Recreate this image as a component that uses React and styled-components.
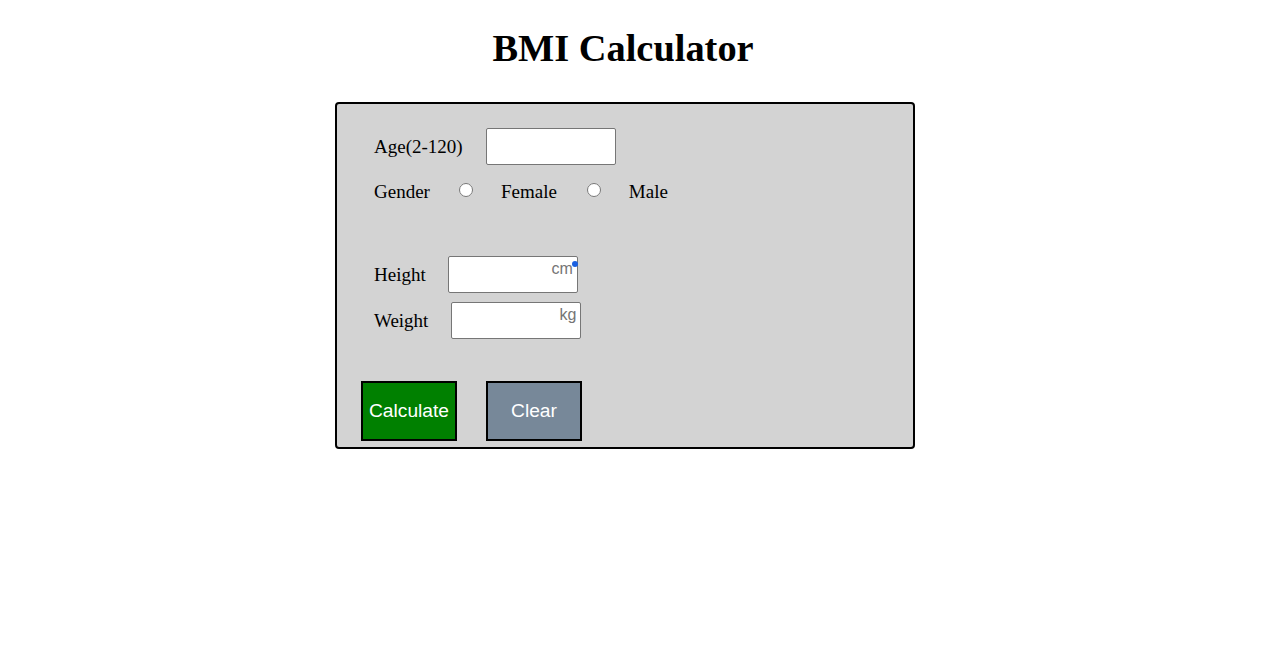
import React, { useState } from "react";
import styled, { createGlobalStyle } from "styled-components";

const GlobalStyle = createGlobalStyle`
  html, body {
    margin: 0;
    padding: 0;
    background: #ffffff;
    font-family: "Liberation Serif", "Times New Roman", serif;
    color: #000000;
  }
`;

const Page = styled.div`
  width: 1250px;
  padding-top: 26px;
`;

const Title = styled.h1`
  margin: 0 0 32px;
  padding-right: 4px;
  text-align: center;
  font-family: "Liberation Serif", "Times New Roman", serif;
  font-size: 38.4px;
  line-height: 44px;
  font-weight: bold;
`;

const Card = styled.form`
  box-sizing: border-box;
  width: 580px;
  height: 347px;
  margin: 0 auto;
  padding: 24px 24px 5px;
  background: #d3d3d3;
  border: 2px solid #000000;
  border-radius: 4px;
  display: flex;
  flex-direction: column;
`;

const Row = styled.div`
  display: flex;
  align-items: center;
  height: ${({ $h }) => $h || 37}px;
  margin-top: ${({ $mt }) => $mt || 0}px;
  padding-left: 13px;
`;

const Label = styled.label`
  font-size: 19px;
  margin-right: ${({ $gap }) => $gap}px;
`;

const Field = styled.span`
  position: relative;
  display: inline-block;
`;

const TextInput = styled.input`
  box-sizing: border-box;
  width: 130px;
  height: 37px;
  margin: 0;
  padding: 3px 4px 14px;
  border: 1px solid #767676;
  border-radius: 2px;
  background: #ffffff;
  font-family: "Liberation Sans", Arial, sans-serif;
  font-size: 16px;
  text-align: right;
  outline: none;

  &::placeholder {
    color: #757575;
  }
`;

const Dot = styled.span`
  position: absolute;
  right: 0;
  top: 5px;
  width: 6px;
  height: 6px;
  border-radius: 50%;
  background: #1a5fe0;
`;

const Radio = styled.input`
  width: 14px;
  height: 14px;
  margin: 0 28px 5px 0;
`;

const Buttons = styled.div`
  display: flex;
  gap: 29px;
  margin-top: 42px;
`;

const Button = styled.button`
  box-sizing: border-box;
  width: 96px;
  height: 60px;
  padding: 0;
  border: 2px solid #000000;
  background: ${({ $bg }) => $bg};
  color: #ffffff;
  font-family: "Liberation Sans", Arial, sans-serif;
  font-size: 19.2px;
  cursor: pointer;
`;

const App = () => {
  const [age, setAge] = useState("");
  const [gender, setGender] = useState("");
  const [height, setHeight] = useState("");
  const [weight, setWeight] = useState("");

  const handleClear = () => {
    setAge("");
    setGender("");
    setHeight("");
    setWeight("");
  };

  return (
    <>
      <GlobalStyle />
      <Page>
        <Title>BMI Calculator</Title>
        <Card onSubmit={(e) => e.preventDefault()}>
          <Row>
            <Label $gap={23}>Age(2-120)</Label>
            <TextInput value={age} onChange={(e) => setAge(e.target.value)} />
          </Row>
          <Row $h={26} $mt={14}>
            <Label $gap={29}>Gender</Label>
            <Radio
              type="radio"
              name="gender"
              checked={gender === "female"}
              onChange={() => setGender("female")}
            />
            <Label $gap={30}>Female</Label>
            <Radio
              type="radio"
              name="gender"
              checked={gender === "male"}
              onChange={() => setGender("male")}
            />
            <Label $gap={0}>Male</Label>
          </Row>
          <Row $mt={51}>
            <Label $gap={22}>Height</Label>
            <Field>
              <TextInput
                placeholder="cm"
                value={height}
                onChange={(e) => setHeight(e.target.value)}
              />
              <Dot />
            </Field>
          </Row>
          <Row $mt={9}>
            <Label $gap={23}>Weight</Label>
            <TextInput
              placeholder="kg"
              value={weight}
              onChange={(e) => setWeight(e.target.value)}
            />
          </Row>
          <Buttons>
            <Button type="submit" $bg="#008000">Calculate</Button>
            <Button type="button" $bg="#778899" onClick={handleClear}>
              Clear
            </Button>
          </Buttons>
        </Card>
      </Page>
    </>
  );
};

export default App;
